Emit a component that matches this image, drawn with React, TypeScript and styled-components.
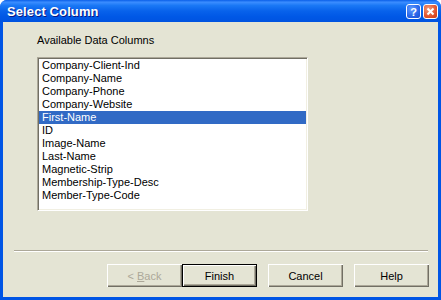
import React from 'react'
import styled, { createGlobalStyle, css } from 'styled-components'

const GlobalStyle = createGlobalStyle`
	html, body {
		margin: 0;
		padding: 0;
		background: #ffffff;
	}
	body {
		font-family: Tahoma, 'Liberation Sans', Arial, sans-serif;
		font-size: 11px;
	}
`

const Window = styled.div`
	width: 441px;
	height: 300px;
	display: flex;
	flex-direction: column;
	box-sizing: border-box;
	background: #0055e5;
	border-radius: 7px 7px 0 0;
	overflow: hidden;
`

const TitleBar = styled.div`
	height: 22px;
	flex: none;
	display: flex;
	align-items: center;
	padding: 0 3px 0 7px;
	background: linear-gradient(
		#0a5fe8 0%,
		#3b8dff 10%,
		#1a78f5 25%,
		#0862eb 50%,
		#0058e6 75%,
		#0053e0 100%
	);
	color: #ffffff;
`

const Title = styled.div`
	flex: 1;
	font-family: 'Liberation Sans', Arial, sans-serif;
	font-weight: bold;
	font-size: 13px;
	letter-spacing: 0.1px;
	text-shadow: 1px 1px 0 #0a1883;
	padding-top: 1px;
`

const CaptionButtons = styled.div`
	display: flex;
	gap: 2px;
	margin-top: 1px;
`

interface CaptionButtonProps {
	$kind: 'help' | 'close'
}

const CaptionButton = styled.div<CaptionButtonProps>`
	width: 15px;
	height: 15px;
	box-sizing: border-box;
	border: 1px solid #ffffff;
	border-radius: 3px;
	display: flex;
	align-items: center;
	justify-content: center;
	font-family: 'Liberation Sans', Arial, sans-serif;
	font-weight: bold;
	font-size: 11px;
	color: #ffffff;
	${({ $kind }) =>
		$kind === 'help'
			? css`
					background: radial-gradient(circle at 35% 30%, #5f9bff 0%, #2a66e8 60%, #1c4fd0 100%);
			  `
			: css`
					background: radial-gradient(circle at 35% 30%, #f29a7a 0%, #e2542f 60%, #c83a14 100%);
			  `}
`

const Client = styled.div`
	flex: 1;
	margin: 0 3px 3px 3px;
	background: #e4e4d4;
	display: flex;
	flex-direction: column;
`

const Body = styled.div`
	flex: 1;
	padding: 12px 0 0 34px;
`

const Label = styled.div`
	color: #000000;
	line-height: 13px;
	height: 13px;
	margin-bottom: 10px;
`

const ListBox = styled.div`
	width: 271px;
	height: 154px;
	box-sizing: border-box;
	background: #ffffff;
	border-top: 1px solid #aca899;
	border-left: 1px solid #aca899;
	border-right: 1px solid #ffffff;
	border-bottom: 1px solid #ffffff;
	box-shadow: inset 1px 1px 0 #716f64, inset -1px -1px 0 #f1efe2;
	padding: 1px;
`

interface ItemProps {
	$selected?: boolean
}

const Item = styled.div<ItemProps>`
	height: 13px;
	line-height: 13px;
	padding-left: 3px;
	white-space: nowrap;
	color: ${({ $selected }) => ($selected ? '#ffffff' : '#000000')};
	background: ${({ $selected }) => ($selected ? '#316ac5' : 'transparent')};
`

const Separator = styled.div`
	margin: 0 10px 0 11px;
	height: 0;
	border-top: 1px solid #aca899;
	border-bottom: 1px solid #ffffff;
`

const ButtonRow = styled.div`
	display: flex;
	justify-content: flex-end;
	gap: 11px;
	padding: 12px 9px 10px 0;
`

const ButtonPair = styled.div`
	display: flex;
`

interface PushButtonProps {
	$default?: boolean
	disabled?: boolean
}

const PushButton = styled.button<PushButtonProps>`
	width: 75px;
	height: 23px;
	box-sizing: border-box;
	margin: 0;
	padding: 0;
	font-family: Tahoma, 'Liberation Sans', Arial, sans-serif;
	font-size: 11px;
	background: #e4e4d4;
	color: ${({ disabled }) => (disabled ? '#aca899' : '#000000')};
	border: ${({ $default }) => ($default ? '1px solid #000000' : 'none')};
	outline: none;
	box-shadow: inset 1px 1px 0 #ffffff, inset -1px -1px 0 #716f64, inset -2px -2px 0 #aca899;
	u {
		text-decoration: underline;
	}
`

const columns = [
	'Company-Client-Ind',
	'Company-Name',
	'Company-Phone',
	'Company-Website',
	'First-Name',
	'ID',
	'Image-Name',
	'Last-Name',
	'Magnetic-Strip',
	'Membership-Type-Desc',
	'Member-Type-Code',
]

export default function App() {
	return (
		<>
			<GlobalStyle />
			<Window>
				<TitleBar>
					<Title>Select Column</Title>
					<CaptionButtons>
						<CaptionButton $kind="help">?</CaptionButton>
						<CaptionButton $kind="close">
							<svg width="9" height="9" viewBox="0 0 9 9">
								<path d="M1.5 1.5 L7.5 7.5 M7.5 1.5 L1.5 7.5" stroke="#ffffff" strokeWidth="2" />
							</svg>
						</CaptionButton>
					</CaptionButtons>
				</TitleBar>
				<Client>
					<Body>
						<Label>Available Data Columns</Label>
						<ListBox>
							{columns.map((c) => (
								<Item key={c} $selected={c === 'First-Name'}>
									{c}
								</Item>
							))}
						</ListBox>
					</Body>
					<Separator />
					<ButtonRow>
						<ButtonPair>
							<PushButton disabled>
								&lt; <u>B</u>ack
							</PushButton>
							<PushButton $default>Finish</PushButton>
						</ButtonPair>
						<PushButton>Cancel</PushButton>
						<PushButton>Help</PushButton>
					</ButtonRow>
				</Client>
			</Window>
		</>
	)
}
